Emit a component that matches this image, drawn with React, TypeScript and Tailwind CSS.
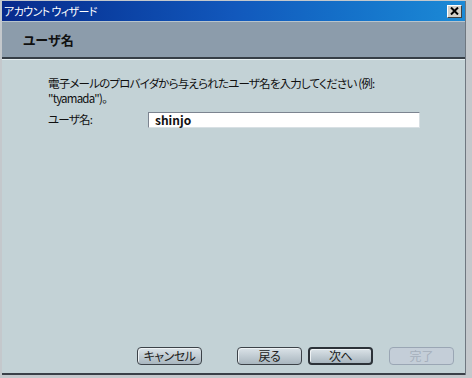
export default function App() {
  const btn =
    "w-[65px] h-[18px] flex items-center justify-center rounded-[4px] text-[12px] leading-none tracking-[-0.5px] bg-gradient-to-b from-[#dbe3e8] to-[#a9b6bf] shadow-[inset_1px_1px_0_#eef2f4]";

  return (
    <div
      className="w-[472px] h-[378px] bg-[#c4c8cc] pl-[2px] pr-[6px] pt-[1px] pb-[3px] flex flex-col [font-feature-settings:'palt']"
      style={{ fontFamily: '"Noto Sans CJK JP", "Liberation Sans", sans-serif' }}
    >
      <div className="flex-1 flex flex-col border-r border-[#6f7780]">
        {/* タイトルバー */}
        <div className="h-[20px] flex items-center justify-between pl-[2px] pr-[3px] bg-gradient-to-r from-[#082a8c] via-[#1258bc] to-[#1c8ad6]">
          <span className="text-white text-[11px] leading-none tracking-[-0.6px]">アカウント ウィザード</span>
          <div className="w-[15px] h-[13px] bg-[#d4d0c8] border border-t-white border-l-white border-r-[#404040] border-b-[#404040] flex items-center justify-center">
            <svg width="9" height="8" viewBox="0 0 9 8">
              <path d="M1 0.5 L8 7.5 M8 0.5 L1 7.5" stroke="#000" strokeWidth="2" />
            </svg>
          </div>
        </div>
        <div className="h-[1px] bg-[#b8c4cc]" />

        {/* ヘッダー */}
        <div className="h-[35px] bg-[#8c9cab] flex items-center pl-[21px]">
          <span className="text-[13px] font-bold text-[#101010] leading-none">ユーザ名</span>
        </div>
        <div className="h-[2px] bg-[#363e46]" />
        <div className="h-[1px] bg-[#e6eef0]" />

        {/* 本文 */}
        <div className="flex-1 bg-[#c3d2d6] flex flex-col">
          <div className="pl-[46px] pt-[16px] pr-[20px] text-[11.5px] tracking-[-0.8px] text-[#101010]">
            <p className="leading-[15px]">
              電子メールのプロバイダから与えられたユーザ名を入力してください (例:
              <br />
              "tyamada")。
            </p>
            <div className="flex items-center mt-[5px]">
              <span className="w-[100px]">ユーザ名:</span>
              <div className="w-[272px] h-[16px] bg-white border border-t-[#7c8490] border-l-[#7c8490] border-r-[#d8e0e4] border-b-[#d8e0e4] flex items-center pl-[6px]">
                <span className="text-[12px] font-bold leading-none tracking-normal text-[#101010]">shinjo</span>
              </div>
            </div>
          </div>

          <div className="flex-1" />

          {/* ボタン */}
          <div className="flex justify-end pr-[11px] pb-[8px]">
            <div className={`${btn} border border-[#3c4248] text-[#202020]`}>キャンセル</div>
            <div className={`${btn} ml-[35px] border border-[#3c4248] text-[#202020]`}>戻る</div>
            <div className={`${btn} ml-[6px] border-2 border-[#2c3238] text-[#202020]`}>次へ</div>
            <div className="w-[65px] h-[18px] ml-[16px] flex items-center justify-center rounded-[4px] text-[12px] leading-none border border-[#9aa6b4] bg-[#c4ced8] text-[#a4aebb]">
              完了
            </div>
          </div>
        </div>
        <div className="h-[2px] bg-[#3a4048]" />
      </div>
    </div>
  );
}
